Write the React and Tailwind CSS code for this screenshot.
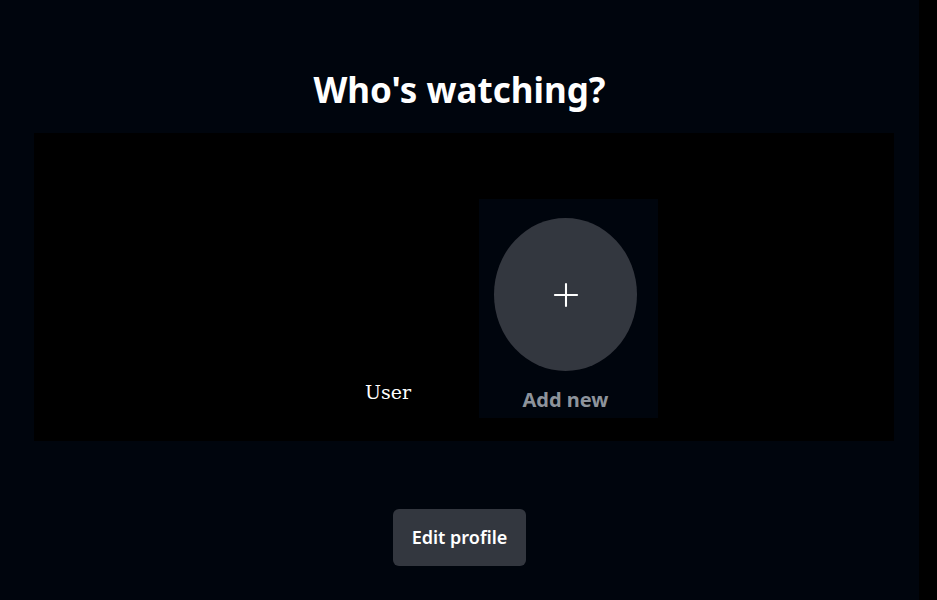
import { Plus } from "lucide-react";

const ProfileTile = ({ name }) => (
  <div className="w-[176px] h-[219px] flex flex-col items-center justify-end pb-[12px]">
    <span className="text-[19px] text-white font-['DejaVu_Serif',serif]">
      {name}
    </span>
  </div>
);

const AddProfileTile = () => (
  <button className="w-[179px] h-[219px] bg-[#00050d] flex flex-col items-start pt-[19px] pl-[15px]">
    <div className="w-[143px] h-[153px] rounded-[50%] bg-[#33373f] flex items-center justify-center">
      <Plus className="w-[38px] h-[38px] text-white" strokeWidth={1.3} />
    </div>
    <span className="w-[143px] mt-[19px] text-center text-[20px] font-bold text-[#8d939b] leading-none">
      Add new
    </span>
  </button>
);

export default function App() {
  return (
    <div className="flex h-[600px] bg-black font-['Noto_Sans','Open_Sans',sans-serif]">
      <main className="w-[919px] h-full bg-[#00050d] flex flex-col">
        <h1 className="mt-[64px] text-center text-[35px] font-bold text-white leading-[52px]">
          Who's watching?
        </h1>

        <section className="ml-[34px] mt-[17px] w-[860px] h-[308px] bg-black flex items-start pt-[66px] pl-[266px] gap-[3px]">
          <ProfileTile name="User" />
          <AddProfileTile />
        </section>

        <div className="flex justify-center mt-[68px]">
          <button className="w-[133px] h-[57px] rounded-[6px] bg-[#33373f] text-white text-[18px] font-semibold">
            Edit profile
          </button>
        </div>
      </main>
    </div>
  );
}
